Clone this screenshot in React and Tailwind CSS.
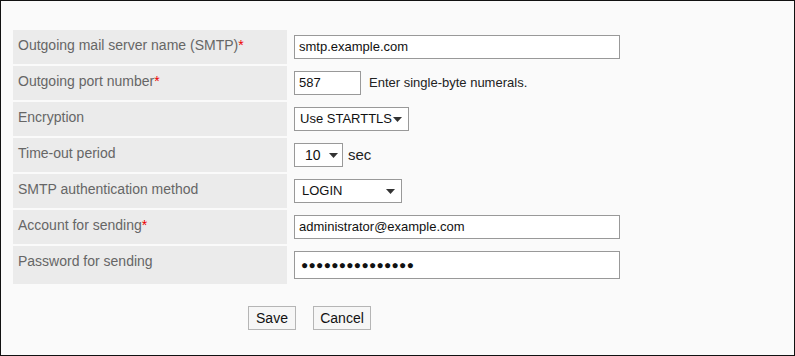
import React from 'react';

const rows = [
  { label: 'Outgoing mail server name (SMTP)', required: true, kind: 'text', value: 'smtp.example.com' },
  { label: 'Outgoing port number', required: true, kind: 'port', value: '587' },
  { label: 'Encryption', kind: 'select', value: 'Use STARTTLS', w: 'w-[115px]', pl: 'pl-[5px]' },
  { label: 'Time-out period', kind: 'timeout', value: '10' },
  { label: 'SMTP authentication method', kind: 'select', value: 'LOGIN', w: 'w-[108px]', pl: 'pl-[7px]' },
  { label: 'Account for sending', required: true, kind: 'text', value: 'administrator@example.com' },
  { label: 'Password for sending', kind: 'password', value: '' },
];

const Arrow = () => (
  <svg width="9" height="5" viewBox="0 0 9 5" className="shrink-0">
    <path d="M0 0 L9 0 L4.5 5 Z" fill="#333" />
  </svg>
);

const FakeSelect = ({ value, w, pl }) => (
  <div className={`${w} h-[24px] flex items-center justify-between ${pl} pr-[6px] border border-[#999] bg-white text-[13px] text-[#111] whitespace-nowrap`}>
    <span>{value}</span>
    <Arrow />
  </div>
);

const Field = ({ row }) => {
  if (row.kind === 'text')
    return (
      <div className="w-[326px] h-[24px] flex items-center px-[4px] border border-[#999] bg-white text-[13px] text-[#111]">
        {row.value}
      </div>
    );
  if (row.kind === 'port')
    return (
      <div className="flex items-center gap-[8px] whitespace-nowrap">
        <div className="w-[67px] h-[24px] flex items-center px-[4px] border border-[#999] bg-white text-[13px] text-[#111]">
          {row.value}
        </div>
        <span className="text-[13px] text-[#222]">Enter single-byte numerals.</span>
      </div>
    );
  if (row.kind === 'select') return <FakeSelect value={row.value} w={row.w} pl={row.pl} />;
  if (row.kind === 'timeout')
    return (
      <div className="flex items-center gap-[5px]">
        <div className="w-[49px] h-[24px] flex items-center gap-[8px] pl-[10px] border border-[#999] bg-white text-[14px] text-[#111]">
          <span>10</span>
          <Arrow />
        </div>
        <span className="text-[15px] text-[#222]">sec</span>
      </div>
    );
  return (
    <div className="w-[326px] h-[28px] flex items-center pl-[6px] border border-[#999] bg-white text-[12px] tracking-[0.3px] text-[#111] whitespace-nowrap">
      ●●●●●●●●●●●●●●●
    </div>
  );
};

export default function App() {
  return (
    <div
      className="w-[795px] h-[356px] border border-[#111] bg-[#fafafa] pt-[27px] pl-[10px]"
      style={{ fontFamily: '"Liberation Sans", Arial, sans-serif' }}
    >
      <div className="flex flex-col gap-[2px] p-[2px]">
        {rows.map((row, i) => (
          <div key={i} className={`flex gap-[2px] ${i === 6 ? 'h-[38px]' : 'h-[34px]'}`}>
            <div className="w-[274px] bg-[#ebebeb] pt-[7px] pl-[5px] text-[14px] leading-[16px] text-[#666]">
              {row.label}
              {row.required && <span className="text-[#e00]">*</span>}
            </div>
            <div className="flex items-center pl-[5px]">
              <Field row={row} />
            </div>
          </div>
        ))}
      </div>
      <div className="flex gap-[17px] mt-[20px] ml-[237px]">
        <button className="w-[48px] h-[24px] border border-[#b5b5b5] bg-[#f6f6f6] text-[14px] text-[#111]">Save</button>
        <button className="w-[58px] h-[24px] border border-[#b5b5b5] bg-[#f6f6f6] text-[14px] text-[#111]">Cancel</button>
      </div>
    </div>
  );
}
